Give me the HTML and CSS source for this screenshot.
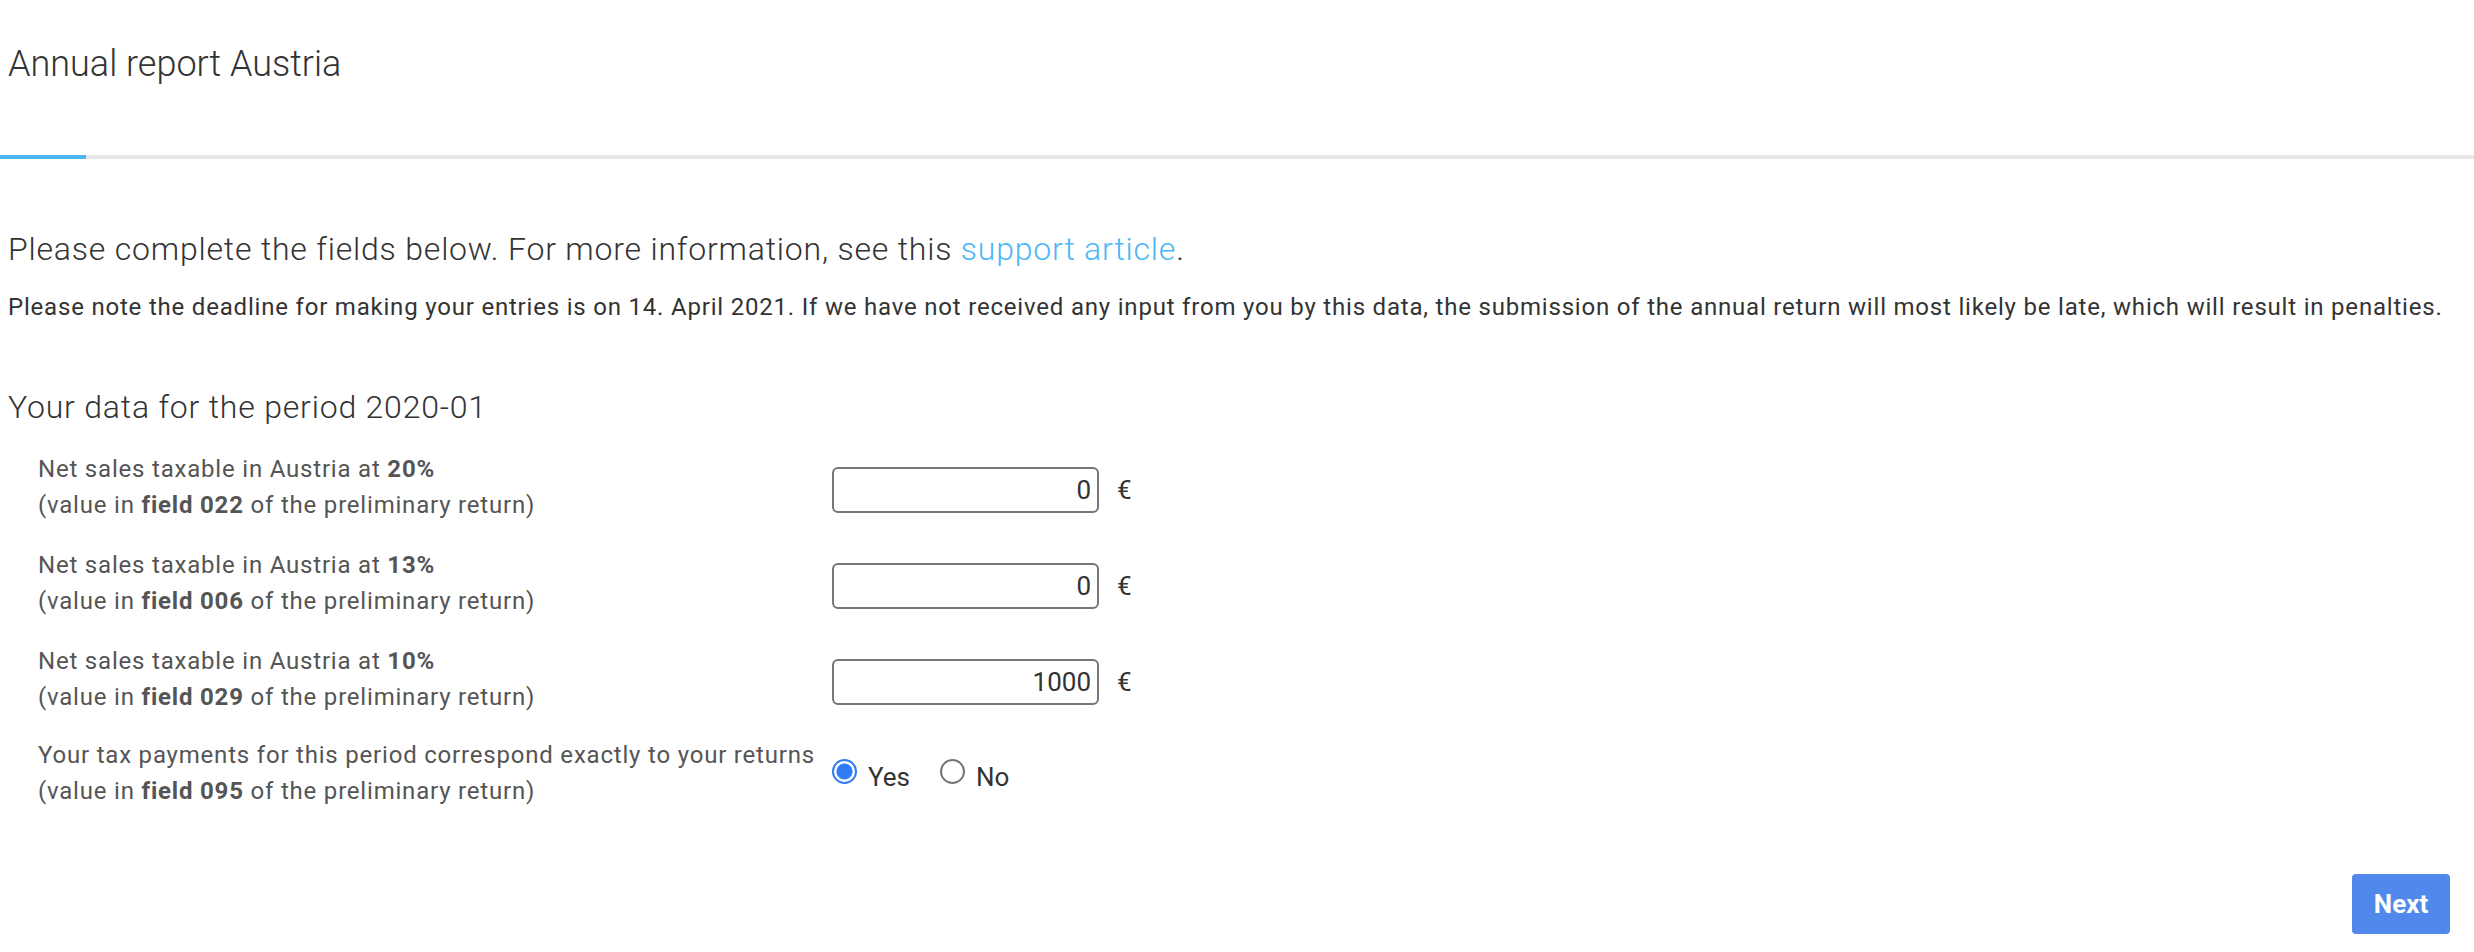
FILE: index.html
```html
<!doctype html>
<html lang="en">
  <head>
    <meta charset="UTF-8" />
    <title>Annual report Austria</title>
    <link rel="stylesheet" href="styles.css">
  </head>
  <body>
    <div class="header">
      <h1 class="title">Annual report Austria</h1>
    </div>
    <div class="progress">
      <div class="progress-fill"></div>
    </div>

    <div class="content">
      <p class="intro">Please complete the fields below. For more information, see this <a href="#" class="link">support article</a>.</p>
      <p class="note">Please note the deadline for making your entries is on 14. April 2021. If we have not received any input from you by this data, the submission of the annual return will most likely be late, which will result in penalties.</p>

      <h2 class="section-title">Your data for the period 2020-01</h2>

      <div class="form-grid">
        <div class="field-label">
          Net sales taxable in Austria at <b>20%</b><br>
          (value in <b>field 022</b> of the preliminary return)
        </div>
        <div class="field-input">
          <input class="amount" type="text" value="0">
          <span class="currency">€</span>
        </div>

        <div class="field-label">
          Net sales taxable in Austria at <b>13%</b><br>
          (value in <b>field 006</b> of the preliminary return)
        </div>
        <div class="field-input">
          <input class="amount" type="text" value="0">
          <span class="currency">€</span>
        </div>

        <div class="field-label">
          Net sales taxable in Austria at <b>10%</b><br>
          (value in <b>field 029</b> of the preliminary return)
        </div>
        <div class="field-input">
          <input class="amount" type="text" value="1000">
          <span class="currency">€</span>
        </div>

        <div class="field-label">
          Your tax payments for this period correspond exactly to your returns<br>
          (value in <b>field 095</b> of the preliminary return)
        </div>
        <div class="field-input radios">
          <label class="radio-option">
            <input type="radio" name="payments" checked>
            <span>Yes</span>
          </label>
          <label class="radio-option">
            <input type="radio" name="payments">
            <span>No</span>
          </label>
        </div>
      </div>

      <div class="actions">
        <button class="btn-next" type="button">Next</button>
      </div>
    </div>
  </body>
</html>
```

FILE: styles.css
```css
body {
  margin: 0;
  font-family: Roboto, "Liberation Sans", Arial, sans-serif;
  color: #333;
  background: #fff;
}

.header {
  padding: 42px 8px 0;
  height: 113px;
}

.title {
  margin: 0;
  font-size: 36px;
  font-weight: 300;
  line-height: 44px;
  color: #333;
}

.progress {
  height: 4px;
  background-color: #e8e8e8;
}

.progress-fill {
  width: 86px;
  height: 4px;
  background-color: #4db6f5;
}

.content {
  padding: 0 24px 0 8px;
  letter-spacing: 0.8px;
}

.intro {
  margin: 70px 0 0;
  font-size: 32px;
  font-weight: 300;
  line-height: 40px;
  color: #333;
}

.link {
  color: #4db6f5;
  text-decoration: none;
}

.note {
  margin: 22px 0 0;
  font-size: 24px;
  line-height: 32px;
  color: #333;
}

.section-title {
  margin: 64px 0 0;
  font-size: 32px;
  font-weight: 300;
  line-height: 40px;
  color: #333;
}

.form-grid {
  display: grid;
  grid-template-columns: 794px auto;
  grid-template-rows: 96px 96px 96px 92px;
  align-items: center;
  margin-top: 12px;
  padding-left: 30px;
}

.field-label {
  font-size: 24px;
  line-height: 36px;
  color: #555;
}

.field-label b {
  font-weight: 700;
}

.field-input {
  display: flex;
  align-items: center;
  letter-spacing: 0;
}

.amount {
  box-sizing: border-box;
  width: 267px;
  height: 46px;
  margin: 5px 0 0;
  padding: 0 6px;
  border: 2px solid #767676;
  border-radius: 6px;
  font-family: Roboto, "Liberation Sans", Arial, sans-serif;
  font-size: 26px;
  color: #333;
  text-align: right;
  outline: none;
}

.currency {
  margin: 5px 0 0 18px;
  font-size: 26px;
  color: #333;
}

.radios {
  gap: 30px;
  margin-top: -3px;
}

.radio-option {
  display: flex;
  align-items: center;
  gap: 11px;
  font-size: 26px;
  color: #333;
}

.radio-option span {
  margin-top: 10px;
}

.radio-option input {
  appearance: none;
  -webkit-appearance: none;
  box-sizing: border-box;
  width: 25px;
  height: 25px;
  margin: 0;
  border: 2px solid #767676;
  border-radius: 50%;
  background: #fff;
}

.radio-option input:checked {
  border-color: #2f7cf6;
  background: radial-gradient(circle, #2f7cf6 0 7.5px, #fff 8.5px);
}

.actions {
  display: flex;
  justify-content: flex-end;
  margin-top: 55px;
}

.btn-next {
  width: 98px;
  height: 60px;
  border: none;
  border-radius: 4px;
  background-color: #5088eb;
  color: #fff;
  font-family: Roboto, "Liberation Sans", Arial, sans-serif;
  font-size: 26px;
  font-weight: 700;
  letter-spacing: 0;
  cursor: pointer;
}
```
